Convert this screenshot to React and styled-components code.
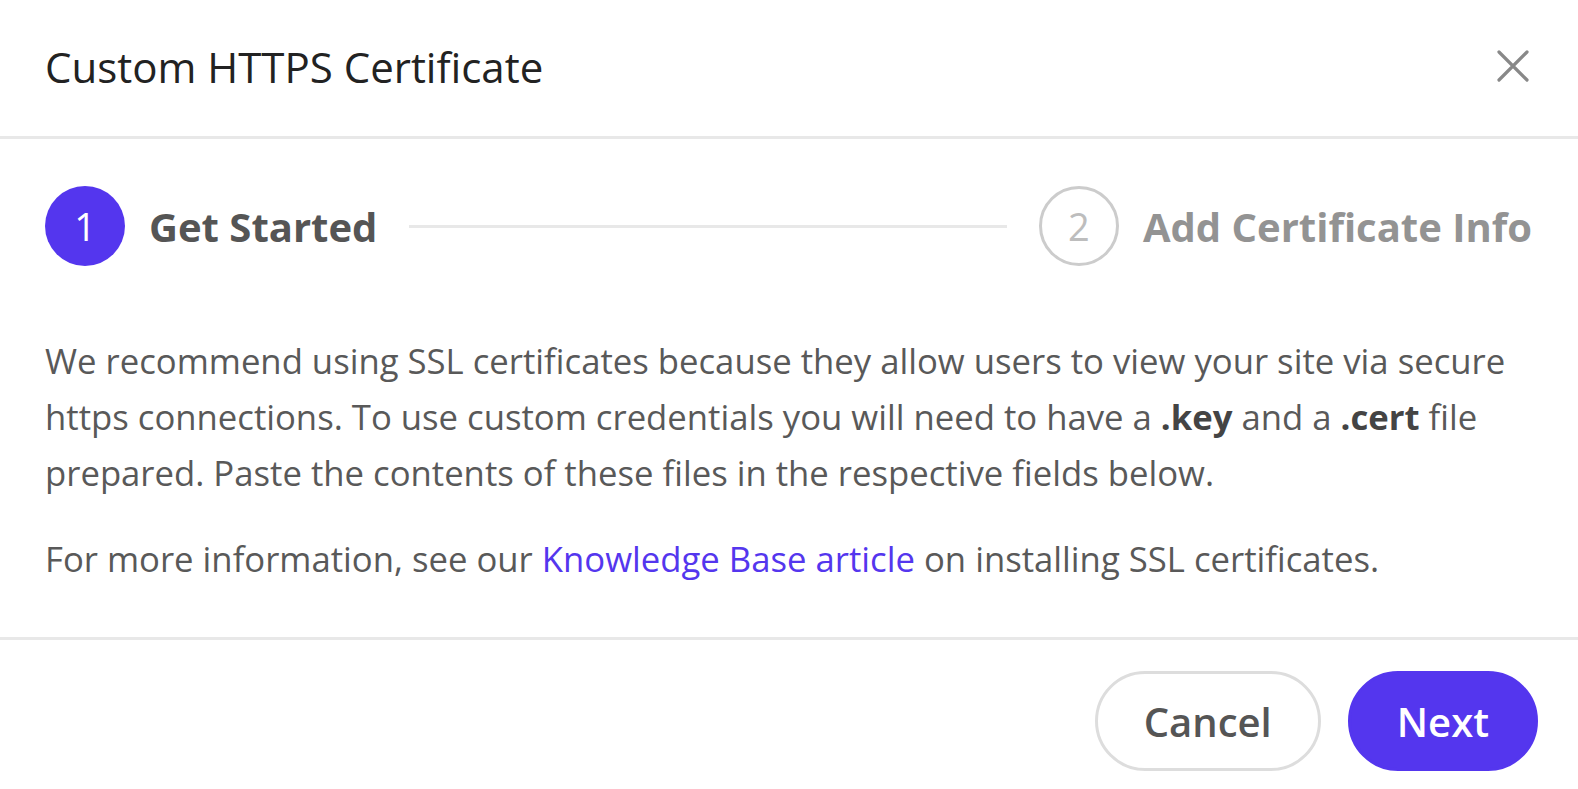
import React from 'react';
import styled, { createGlobalStyle } from 'styled-components';

const Global = createGlobalStyle`
  html, body {
    margin: 0;
    padding: 0;
    background: #ffffff;
    overflow: hidden;
  }
  body {
    font-family: "Open Sans", "Noto Sans", sans-serif;
  }
`;

const purple = '#5436ee';

function CloseIcon() {
  return (
    <svg width="34" height="34" viewBox="0 0 34 34" fill="none">
      <path d="M3 3L31 31M31 3L3 31" stroke="#888888" strokeWidth="3.2" strokeLinecap="round" />
    </svg>
  );
}

function App() {
  return (
    <>
      <Global />
      <Modal>
        <Header>
          <Title>Custom HTTPS Certificate</Title>
          <CloseButton aria-label="Close">
            <CloseIcon />
          </CloseButton>
        </Header>

        <Body>
          <Stepper>
            <Step>
              <StepCircle active>1</StepCircle>
              <StepLabel active>Get Started</StepLabel>
            </Step>
            <StepLine />
            <Step>
              <StepCircle>2</StepCircle>
              <StepLabel>Add Certificate Info</StepLabel>
            </Step>
          </Stepper>

          <Text>
            We recommend using SSL certificates because they allow users to view your site via secure
            https connections. To use custom credentials you will need to have a <b>.key</b> and a{' '}
            <b>.cert</b> file prepared. Paste the contents of these files in the respective fields below.
          </Text>
          <Text>
            For more information, see our <Link href="#">Knowledge Base article</Link> on installing SSL
            certificates.
          </Text>
        </Body>

        <Footer>
          <Button>Cancel</Button>
          <Button primary>Next</Button>
        </Footer>
      </Modal>
    </>
  );
}

const Modal = styled.div`
  width: 100%;
  height: 789px;
  overflow: hidden;
  background: #fff;
  display: flex;
  flex-direction: column;
`;

const Header = styled.header`
  flex-shrink: 0;
  height: 136px;
  padding: 0 48px 0 45px;
  display: flex;
  align-items: center;
  justify-content: space-between;
  border-bottom: 3px solid #e8e8e8;
  box-sizing: content-box;
`;

const Title = styled.h1`
  margin: 0 0 4px;
  font-size: 42px;
  font-weight: 400;
  color: #222;
`;

const CloseButton = styled.button`
  border: none;
  background: none;
  padding: 0;
  cursor: pointer;
  display: flex;
  margin-bottom: 4px;
`;

const Body = styled.section`
  flex-shrink: 0;
  padding: 47px 46px 50px 45px;
  border-bottom: 3px solid #e8e8e8;
`;

const Stepper = styled.div`
  display: flex;
  align-items: center;
  gap: 32px;
  margin-bottom: 67px;
`;

const Step = styled.div`
  display: flex;
  align-items: center;
  gap: 24px;
`;

const StepCircle = styled.div`
  width: 80px;
  height: 80px;
  border-radius: 50%;
  box-sizing: border-box;
  display: flex;
  align-items: center;
  justify-content: center;
  font-size: 38px;
  font-weight: 400;
  background: ${(p) => (p.active ? purple : '#fff')};
  color: ${(p) => (p.active ? '#fff' : '#bdbdbd')};
  border: ${(p) => (p.active ? 'none' : '3px solid #cccccc')};
`;

const StepLabel = styled.span`
  font-size: 40px;
  font-weight: 700;
  color: ${(p) => (p.active ? '#555555' : '#939393')};
  white-space: nowrap;
`;

const StepLine = styled.div`
  flex: 1;
  height: 3px;
  background: #e8e8e8;
`;

const Text = styled.p`
  margin: 0 0 30px;
  font-size: 34.7px;
  line-height: 56px;
  color: #595959;
  &:last-child {
    margin-bottom: 0;
  }
  b {
    color: #444;
    font-weight: 700;
  }
`;

const Link = styled.a`
  color: ${purple};
  text-decoration: none;
`;

const Footer = styled.footer`
  flex-shrink: 0;
  display: flex;
  justify-content: flex-end;
  gap: 27px;
  padding: 31px 40px 0 45px;
`;

const Button = styled.button`
  height: 100px;
  padding: 0 46px;
  border-radius: 50px;
  font-family: "Open Sans", "Noto Sans", sans-serif;
  font-size: 40px;
  font-weight: 600;
  cursor: pointer;
  background: ${(p) => (p.primary ? purple : '#fff')};
  color: ${(p) => (p.primary ? '#fff' : '#555')};
  border: 3px solid ${(p) => (p.primary ? purple : '#dddddd')};
`;

export default App;
